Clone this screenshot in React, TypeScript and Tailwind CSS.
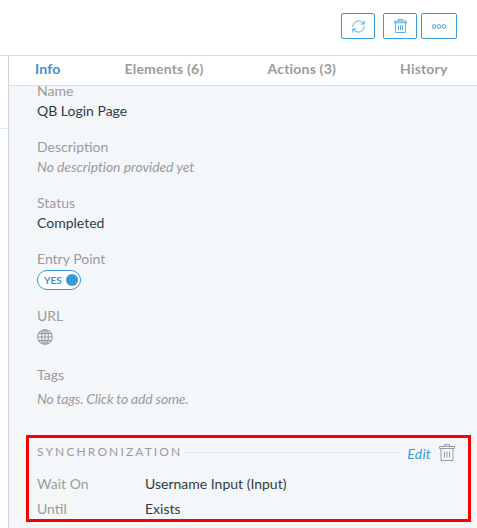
import { RefreshCw } from "lucide-react";

function Field({ label, value, italic }: { label: string; value?: string; italic?: boolean }) {
  return (
    <div className="mb-4">
      <div className="text-sm leading-5 text-[#9b9b9b]">{label}</div>
      {value && (
        <div className={italic ? "text-sm leading-5 tracking-[-0.08px] text-[#9b9b9b] italic" : "text-sm leading-5 text-[#333a42]"}>{value}</div>
      )}
    </div>
  );
}

function TopButton({ wide, children }: { wide?: boolean; children: React.ReactNode }) {
  return (
    <button className={`flex h-[26px] items-center justify-center rounded-[2px] border border-[#3a9ad9] text-[#3a9ad9] ${wide ? "w-[36px]" : "w-[34px]"}`}>
      {children}
    </button>
  );
}

function TrashIcon({ className }: { className?: string }) {
  return (
    <svg viewBox="0 0 16 17" fill="none" stroke="currentColor" strokeWidth="1" className={className}>
      <path d="M0.5 2.5h15v2h-15zM5.5 2.5v-2h5v2M2 4.5v12h12v-12M5.5 7.5v6M8 7.5v6M10.5 7.5v6" />
    </svg>
  );
}

function GlobeIcon() {
  return (
    <svg viewBox="0 0 16 16" fill="none" stroke="#9b9b9b" strokeWidth="1.1" className="mt-[3px] h-4 w-4">
      <circle cx="8" cy="8" r="7.3" />
      <ellipse cx="8" cy="8" rx="3.4" ry="7.3" />
      <path d="M8 0.7v14.6M0.7 8h14.6M1.8 4.4h12.4M1.8 11.6h12.4" />
    </svg>
  );
}

export default function App() {
  return (
    <div className="flex h-[528px] w-[477px] flex-col overflow-hidden bg-white font-['Lato','Open_Sans',sans-serif]">
      <div className="flex h-[56px] shrink-0 items-start justify-end gap-[4px] border-b border-[#d8dde3] pt-[13px] pr-[20px]">
        <div className="mr-[4px]">
          <TopButton>
            <RefreshCw size={15} strokeWidth={1.4} />
          </TopButton>
        </div>
        <TopButton>
          <TrashIcon className="h-[14px] w-[13px]" />
        </TopButton>
        <TopButton wide>
          <svg viewBox="0 0 18 6" className="h-[5px] w-[16px]" fill="none" stroke="currentColor" strokeWidth="1.1">
            <circle cx="3" cy="3" r="2.2" />
            <circle cx="9" cy="3" r="2.2" />
            <circle cx="15" cy="3" r="2.2" />
          </svg>
        </TopButton>
      </div>
      <div className="flex min-h-0 flex-1">
        <div className="w-[8px] shrink-0">
          <div className="h-[73px] border-b border-[#e3e6ea]" />
        </div>
        <div className="flex min-w-0 flex-1 flex-col border-l border-[#d0d5db]">
          <div className="flex h-[30px] shrink-0 items-center gap-[64px] border-b border-[#d8dde3] pb-[4px] pl-[26px] text-sm font-bold tracking-[0.2px] text-[#9b9b9b]">
            <span className="text-[#3d8fd6]">Info</span>
            <span>Elements (6)</span>
            <span>Actions (3)</span>
            <span>History</span>
          </div>
          <div className="min-h-0 flex-1 bg-[#f4f7f9]">
            <div className="pl-[28px]">
              <div className="mb-4">
                <div className="mb-[5px] text-sm leading-[10px] text-[#9b9b9b]">Name</div>
                <div className="text-sm leading-5 text-[#333a42]">QB Login Page</div>
              </div>
              <Field label="Description" value="No description provided yet" italic />
              <Field label="Status" value="Completed" />
              <div className="mb-4">
                <div className="text-sm leading-5 text-[#9b9b9b]">Entry Point</div>
                <div className="mt-px flex h-[20px] w-[44px] items-center justify-between rounded-full border border-[#3a9ad9] bg-white pr-[2px] pl-[6px]">
                  <span className="text-[10px] font-bold text-[#3a8fd0]">YES</span>
                  <span className="h-[12px] w-[12px] rounded-full bg-[#3a9ad9]" />
                </div>
              </div>
              <div className="mb-[20px]">
                <div className="text-sm leading-5 text-[#9b9b9b]">URL</div>
                <GlobeIcon />
              </div>
              <div className="mb-[26px]">
                <div className="text-sm leading-5 text-[#9b9b9b]">Tags</div>
                <div className="mt-[4px] text-sm leading-5 tracking-[-0.2px] text-[#9b9b9b] italic">No tags. Click to add some.</div>
              </div>
            </div>
            <div className="ml-[17px] h-[87px] w-[445px] border-[3px] border-[#f80000] px-[8px] pt-[2px]">
              <div className="flex h-[24px] items-center">
                <span className="text-xs tracking-[2.13px] text-[#9b9b9b]">SYNCHRONIZATION</span>
                <div className="mr-[5px] ml-[4px] h-px flex-1 bg-[#e3e6ea]" />
                <span className="mt-[4px] mr-[8px] text-sm tracking-[0.2px] text-[#3a9ad9] italic">Edit</span>
                <TrashIcon className="mr-[5px] h-[17px] w-[16px] text-[#9b9b9b]" />
              </div>
              <div className="mt-[10px] flex h-[20px] items-center text-sm">
                <span className="w-[108px] text-[#9b9b9b]">Wait On</span>
                <span className="text-[#333a42]">Username Input (Input)</span>
              </div>
              <div className="mt-[5px] flex h-[20px] items-center text-sm">
                <span className="w-[108px] text-[#9b9b9b]">Until</span>
                <span className="text-[#333a42]">Exists</span>
              </div>
            </div>
          </div>
        </div>
      </div>
    </div>
  );
}
